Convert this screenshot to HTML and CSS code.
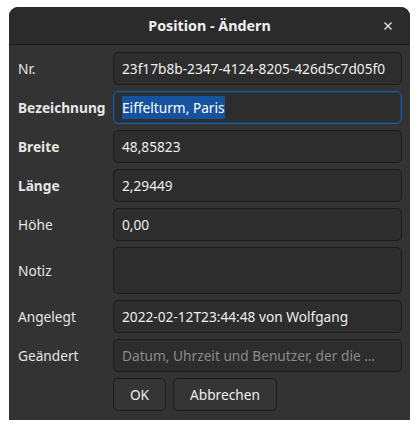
FILE: index.html
```html
<!DOCTYPE html>
<html lang="de">
<head>
<meta charset="utf-8">
<title>Position - Ändern</title>
<link rel="stylesheet" href="styles.css">
</head>
<body>
<div class="window">
  <header class="titlebar">
    <span class="title">Position - Ändern</span>
    <span class="close" aria-label="Schließen">
      <svg width="8" height="8" viewBox="0 0 8 8"><path d="M0.5 0.5 L7.5 7.5 M7.5 0.5 L0.5 7.5" stroke="#e6e6e6" stroke-width="1.4" stroke-linecap="butt"/></svg>
    </span>
  </header>
  <main class="content">
    <div class="form">
      <label class="lbl">Nr.</label>
      <div class="entry">23f17b8b-2347-4124-8205-426d5c7d05f0</div>

      <label class="lbl bold">Bezeichnung</label>
      <div class="entry focused"><span class="sel">Eiffelturm, Paris</span></div>

      <label class="lbl bold">Breite</label>
      <div class="entry">48,85823</div>

      <label class="lbl bold">Länge</label>
      <div class="entry">2,29449</div>

      <label class="lbl">Höhe</label>
      <div class="entry">0,00</div>

      <label class="lbl">Notiz</label>
      <div class="entry tall"></div>

      <label class="lbl">Angelegt</label>
      <div class="entry">2022-02-12T23:44:48 von Wolfgang</div>

      <label class="lbl">Geändert</label>
      <div class="entry placeholder">Datum, Uhrzeit und Benutzer, der die …</div>

      <div class="spacer"></div>
      <div class="buttons">
        <button class="btn ok">OK</button>
        <button class="btn">Abbrechen</button>
      </div>
    </div>
  </main>
</div>
</body>
</html>
```
FILE: styles.css
```css
html, body {
  margin: 0;
  padding: 0;
  background: #ffffff;
}
body {
  font-family: "Noto Sans", "DejaVu Sans", sans-serif;
  font-size: 13.7px;
  color: #eeeeee;
}
.window {
  margin: 7px 0 0 9px;
  width: 401px;
  height: 413px;
  background: #333333;
  border-radius: 9px 9px 0 0;
  overflow: hidden;
  display: flex;
  flex-direction: column;
}
.titlebar {
  height: 37px;
  flex: 0 0 37px;
  background: #2b2b2b;
  border-bottom: 1px solid #1a1a1a;
  display: flex;
  align-items: center;
  justify-content: center;
  position: relative;
}
.title {
  font-weight: bold;
  font-size: 14.3px;
  color: #f0f0f0;
}
.close {
  position: absolute;
  right: 18px;
  top: 15px;
  width: 8px;
  height: 8px;
  display: flex;
}
.content {
  padding: 7px 8px 9px 9px;
}
.form {
  display: grid;
  grid-template-columns: 89px 1fr;
  grid-template-rows: repeat(5, 33px) 47px repeat(3, 33px);
  column-gap: 6px;
  row-gap: 6px;
}
.lbl {
  display: flex;
  align-items: center;
  color: #e6e6e6;
  white-space: nowrap;
}
.lbl.bold {
  font-weight: bold;
}
.entry {
  box-sizing: border-box;
  height: 100%;
  background: #2d2d2d;
  border: 1px solid #1c1c1c;
  border-radius: 5px;
  padding: 0 8px;
  display: flex;
  align-items: center;
  white-space: nowrap;
  overflow: hidden;
  color: #eeeeee;
}
.entry.focused {
  border: 1px solid #1c5aa0;
  box-shadow: inset 0 0 0 1px #163f6e;
}
.sel {
  background: #15539e;
  color: #ffffff;
  padding: 2px 0;
}
.placeholder {
  color: #8a8a8a;
}
.buttons {
  display: flex;
  gap: 7px;
}
.btn {
  box-sizing: border-box;
  height: 33px;
  background: #353535;
  border: 1px solid #1b1b1b;
  border-radius: 5px;
  color: #eeeeee;
  font-family: inherit;
  font-size: 13.7px;
  padding: 0 16px;
}
.btn.ok {
  width: 53px;
  padding: 0;
}
```
